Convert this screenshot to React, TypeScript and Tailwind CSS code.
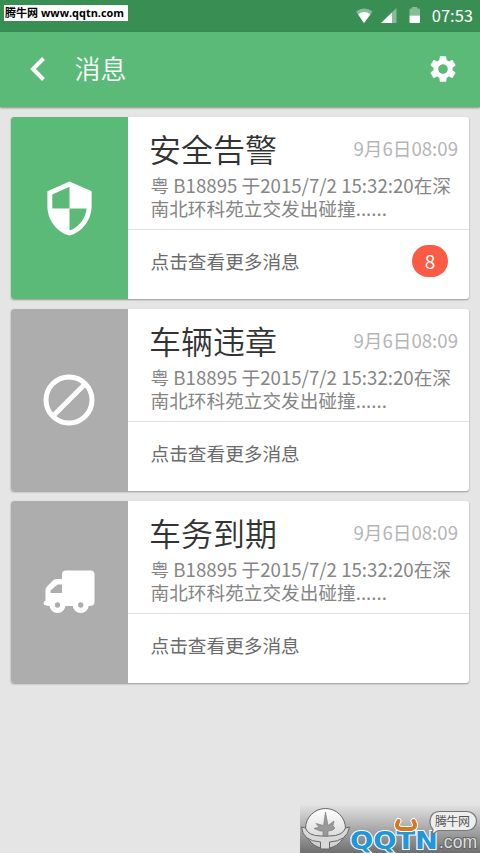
import type { ReactNode } from "react";
import { MdSecurity, MdSettings } from "react-icons/md";

interface Message {
  title: string;
  date: string;
  icon: ReactNode;
  color: string;
  unread?: number;
}

function BlockIcon() {
  return (
    <svg width="52" height="52" viewBox="0 0 52 52" fill="none" stroke="#fff" strokeWidth="5">
      <circle cx="26" cy="26" r="23" />
      <path d="M10 42 42 10" />
    </svg>
  );
}

function TruckIcon() {
  return (
    <svg width="52" height="44" viewBox="0 0 52 44">
      <path
        fill="#fff"
        d="M23 .5h24.500a4 4 0 0 1 4 4V32q0 4-5 4H19Q.5 37 .5 33.500q0-2.500 2-2.700V20q0-2 1.500-3.500l6-6Q11.500 9 13.500 9H19V4.500a4 4 0 0 1 4-4Z"
      />
      <path fill="#adadad" d="M19 14.500h-4.500L7.500 20.500v2.500H19z" />
      <path fill="#adadad" d="M5 36h41v8H5z" />
      <circle cx="14.500" cy="35" r="8" fill="#fff" />
      <circle cx="37.700" cy="35" r="8" fill="#fff" />
      <circle cx="14.500" cy="35" r="2.700" fill="#adadad" />
      <circle cx="37.700" cy="35" r="2.700" fill="#adadad" />
    </svg>
  );
}

const messages: Message[] = [
  {
    title: "安全告警",
    date: "9月6日08:09",
    icon: <MdSecurity size={59} />,
    color: "bg-[#5bba78]",
    unread: 8,
  },
  { title: "车辆违章", date: "9月6日08:09", icon: <BlockIcon />, color: "bg-[#adadad]" },
  { title: "车务到期", date: "9月6日08:09", icon: <TruckIcon />, color: "bg-[#adadad]" },
];

function StatusBar() {
  return (
    <div className="relative flex h-8 items-center justify-end bg-[#398f53] pr-[7px] text-white">
      <div className="absolute left-1 top-[5px] h-4 w-[124px] bg-white pl-px text-[11px] font-bold text-black">
        <svg width="123" height="16" className="block">
          <text x="0" y="12" textLength="33" lengthAdjust="spacingAndGlyphs">腾牛网</text>
          <text x="36" y="12" textLength="83" lengthAdjust="spacingAndGlyphs" fontFamily="Open Sans">www.qqtn.com</text>
        </svg>
      </div>
      <svg width="66" height="18" viewBox="0 0 66 18" fill="#fff" className="mr-[11px]">
        <path opacity=".4" d="M1 4.500Q9 -1.500 17.500 4.500L9 16z" />
        <path d="M3 7.200Q9 2.800 15.500 7.200L9 16z" />
        <path opacity=".4" d="M41.500 1v15H26z" />
        <path d="M37 5.500V16H26z" />
        <path opacity=".4" d="M57 0h5v1.500h2q1 0 1 1V8.500H54.500V2.500q0-1 1-1H57z" />
        <path d="M54.500 8.500H65V15q0 1-1 1h-8.500q-1 0-1-1z" />
      </svg>
      <span className="-mt-0.5 text-[16.500px] leading-8">07:53</span>
    </div>
  );
}

function Header() {
  return (
    <header className="relative flex h-[74.500px] items-center bg-[#5bba78] pl-[29px] pr-[21px] text-white shadow-[0_1px_2px_rgba(0,0,0,0.4)]">
      <svg width="17" height="24" viewBox="0 0 17 24" fill="none" stroke="#fff" strokeWidth="4">
        <path d="M14.500 1.500 4 12l10.500 10.500" />
      </svg>
      <h1 className="-mt-0.5 ml-[28.500px] flex-1 text-[26px] font-[350] leading-[70px]">消息</h1>
      <MdSettings size={32} />
    </header>
  );
}

function MessageCard({ title, date, icon, color, unread }: Message) {
  return (
    <article className="flex h-[181.500px] overflow-hidden rounded-[3px] bg-white shadow-[0_1px_2px_rgba(0,0,0,0.35)]">
      <div className={`flex w-[117.500px] shrink-0 items-center justify-center pt-px text-white ${color}`}>{icon}</div>
      <div className="min-w-0 flex-1">
        <div className="h-[113px] border-b border-[#dedede] pl-[22.500px] pr-[11px] pt-[5.500px]">
          <div className="flex h-[50.500px] items-center justify-between">
            <h2 className="-ml-[1.500px] text-[32px] font-[350] leading-[50px] text-[#333]">{title}</h2>
            <span className="pt-px text-[18.670px] text-[#b5b5b5]">{date}</span>
          </div>
          <p className="whitespace-nowrap text-[18.670px] leading-[23px] text-[#858585]">
            粤 B18895 于2015/7/2 15:32:20在深
            <br />
            南北环科苑立交发出碰撞......
          </p>
        </div>
        <div className="flex h-[62px] items-center justify-between pl-[22.500px] pr-[21px]">
          <span className="text-[18.670px] text-[#6b6b6b]">点击查看更多消息</span>
          {unread && (
            <span className="h-8 w-9 rounded-2xl bg-[#fb5b45] text-center text-[19px] leading-[31px] text-white">
              {unread}
            </span>
          )}
        </div>
      </div>
    </article>
  );
}

function Watermark() {
  return (
    <svg width="180" height="48" viewBox="0 0 180 48" className="absolute bottom-0 right-0">
      <defs>
        <linearGradient id="plate" x1="0" y1="0" x2="0" y2="1">
          <stop offset="0" stopColor="#e2e2e2" />
          <stop offset="1" stopColor="#6f6f6f" />
        </linearGradient>
        <linearGradient id="ball" x1="0" y1="0" x2="0" y2="1">
          <stop offset="0" stopColor="#fff" />
          <stop offset="1" stopColor="#ccc" />
        </linearGradient>
      </defs>
      <rect width="180" height="48" fill="url(#plate)" />
      <circle cx="25.500" cy="23.500" r="20" fill="url(#ball)" stroke="#666" />
      {/* bull horns curling round the ball */}
      <path
        d="M1.500 22q1 14 19 15v7h9v-7q18-1 20-15l-4 1q-3 8-16 8h-8Q8 31 5.500 23z"
        fill="#d8d8d8"
        stroke="#666"
      />
      <path
        d="M25.500 7 23.500 20.500 16 18.500l3 3.500-5 1.500 6 2.500h3V31h5v-5q5 0 7-3l-2-2 1-5-6 4.500z"
        fill="#999"
        stroke="#777"
        strokeWidth=".6"
      />
      <text
        x="50"
        y="44"
        fontFamily="DejaVu Sans"
        fontWeight="bold"
        fontSize="24"
        textLength="88"
        lengthAdjust="spacingAndGlyphs"
        fill="#2196d8"
        stroke="#fff"
        strokeWidth="2"
        paintOrder="stroke"
      >
        QQTN
      </text>
      <g fill="none" strokeLinecap="round">
        <path d="M98.500 16q-4 6.500 2.500 8h10q6.500-1.500 2.500-8" stroke="#fff" strokeWidth="6" />
        <path d="M98.500 16q-4 6.500 2.500 8h10q6.500-1.500 2.500-8" stroke="#d77722" strokeWidth="4" />
      </g>
      <path
        d="M140 6.500h27a9.500 9.500 0 0 1 0 19h-29l-6 4 1-5q-3-3-3-7 0-11 10-11z"
        fill="#eee"
        stroke="#777"
        strokeWidth="1.200"
      />
      <text x="135" y="21" fontSize="12" textLength="35" fill="#555">腾牛网</text>
      <text
        x="139"
        y="43"
        fontFamily="Liberation Sans"
        fontSize="19"
        textLength="38"
        lengthAdjust="spacingAndGlyphs"
        fill="#ddd"
        stroke="#666"
        strokeWidth="2"
        paintOrder="stroke"
      >
        .com
      </text>
    </svg>
  );
}

export default function App() {
  return (
    <div className="relative h-[853px] w-[480px] overflow-hidden bg-[#e5e5e5] font-['Noto_Sans_CJK_SC',sans-serif]">
      <StatusBar />
      <Header />
      <main className="flex flex-col gap-[10.500px] pl-[10.500px] pr-[11px] pt-[10.500px]">
        {messages.map((message) => (
          <MessageCard key={message.title} {...message} />
        ))}
      </main>
      <Watermark />
    </div>
  );
}
